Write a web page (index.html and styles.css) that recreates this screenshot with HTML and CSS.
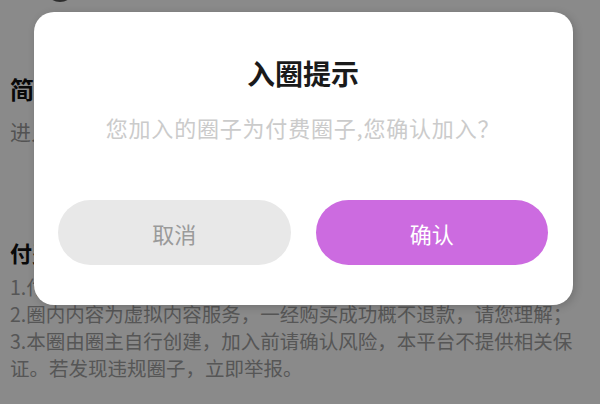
FILE: index.html
```html
<!DOCTYPE html>
<html lang="zh-CN">
<head>
<meta charset="utf-8">
<title>入圈提示</title>
<link rel="stylesheet" href="styles.css">
</head>
<body>
<div class="page">
  <div class="avatar"></div>
  <h2 class="sec-title first">简介</h2>
  <p class="sec-text">进入圈子</p>
  <h2 class="sec-title second">付费须知</h2>
  <ol class="rules">
    <li>1.付费圈子需支付费用后方可加入，加入后可查看内容；</li>
    <li>2.圈内内容为虚拟内容服务，一经购买成功概不退款，请您理解；</li>
    <li>3.本圈由圈主自行创建，加入前请确认风险，本平台不提供相关保证。若发现违规圈子，立即举报。</li>
  </ol>
</div>
<div class="mask"></div>
<div class="dialog">
  <h1 class="dialog-title">入圈提示</h1>
  <p class="dialog-msg">您加入的圈子为付费圈子,您确认加入？</p>
  <div class="dialog-actions">
    <button class="btn btn-cancel">取消</button>
    <button class="btn btn-ok">确认</button>
  </div>
</div>
</body>
</html>
```
FILE: styles.css
```css
* { box-sizing: border-box; }
html, body {
  margin: 0;
  padding: 0;
  width: 600px;
  height: 404px;
  overflow: hidden;
  background: #ffffff;
  font-family: "Noto Sans CJK SC", "Noto Sans", sans-serif;
}
.page {
  padding: 0 10px;
}
.avatar {
  width: 30px;
  height: 30px;
  border-radius: 50%;
  background: #555;
  margin: -28px 0 0 35px;
}
.sec-title {
  margin: 0;
  font-size: 24px;
  line-height: 30px;
  font-weight: 700;
  color: #111;
}
.sec-title.first { margin-top: 72px; }
.sec-title.second {
  margin-top: 92px;
  font-size: 22px;
}
.sec-text {
  margin: 14px 0 0;
  font-size: 21px;
  line-height: 27px;
  color: #999;
  white-space: nowrap;
}
.rules {
  list-style: none;
  margin: 6px 0 0;
  padding: 0;
  width: 572px;
  font-size: 19.5px;
  line-height: 27px;
  color: #a0a0a0;
}
.rules li { margin: 0; }
.mask {
  position: absolute;
  inset: 0;
  background: rgba(0, 0, 0, 0.46);
}
.dialog {
  position: absolute;
  left: 34px;
  top: 12px;
  width: 539px;
  height: 293px;
  background: #fff;
  border-radius: 20px;
  box-shadow: 2px 2px 8px rgba(0, 0, 0, 0.18);
  padding: 43px 25px 40px 24px;
  display: flex;
  flex-direction: column;
  align-items: stretch;
}
.dialog-title {
  margin: 0;
  text-align: center;
  font-size: 28px;
  line-height: 36px;
  font-weight: 700;
  color: #1a1a1a;
}
.dialog-msg {
  margin: 21px 0 0;
  text-align: center;
  font-size: 22px;
  line-height: 30px;
  letter-spacing: 0.8px;
  color: #cbcbcb;
}
.dialog-actions {
  margin-top: auto;
  display: flex;
  gap: 25px;
}
.btn {
  flex: 1;
  height: 65px;
  border: none;
  border-radius: 33px;
  font-family: inherit;
  font-size: 22px;
  padding: 0;
}
.btn-cancel {
  background: #e8e8e8;
  color: #9a9a9a;
}
.btn-ok {
  background: #cc6be0;
  color: #fff;
}
```
